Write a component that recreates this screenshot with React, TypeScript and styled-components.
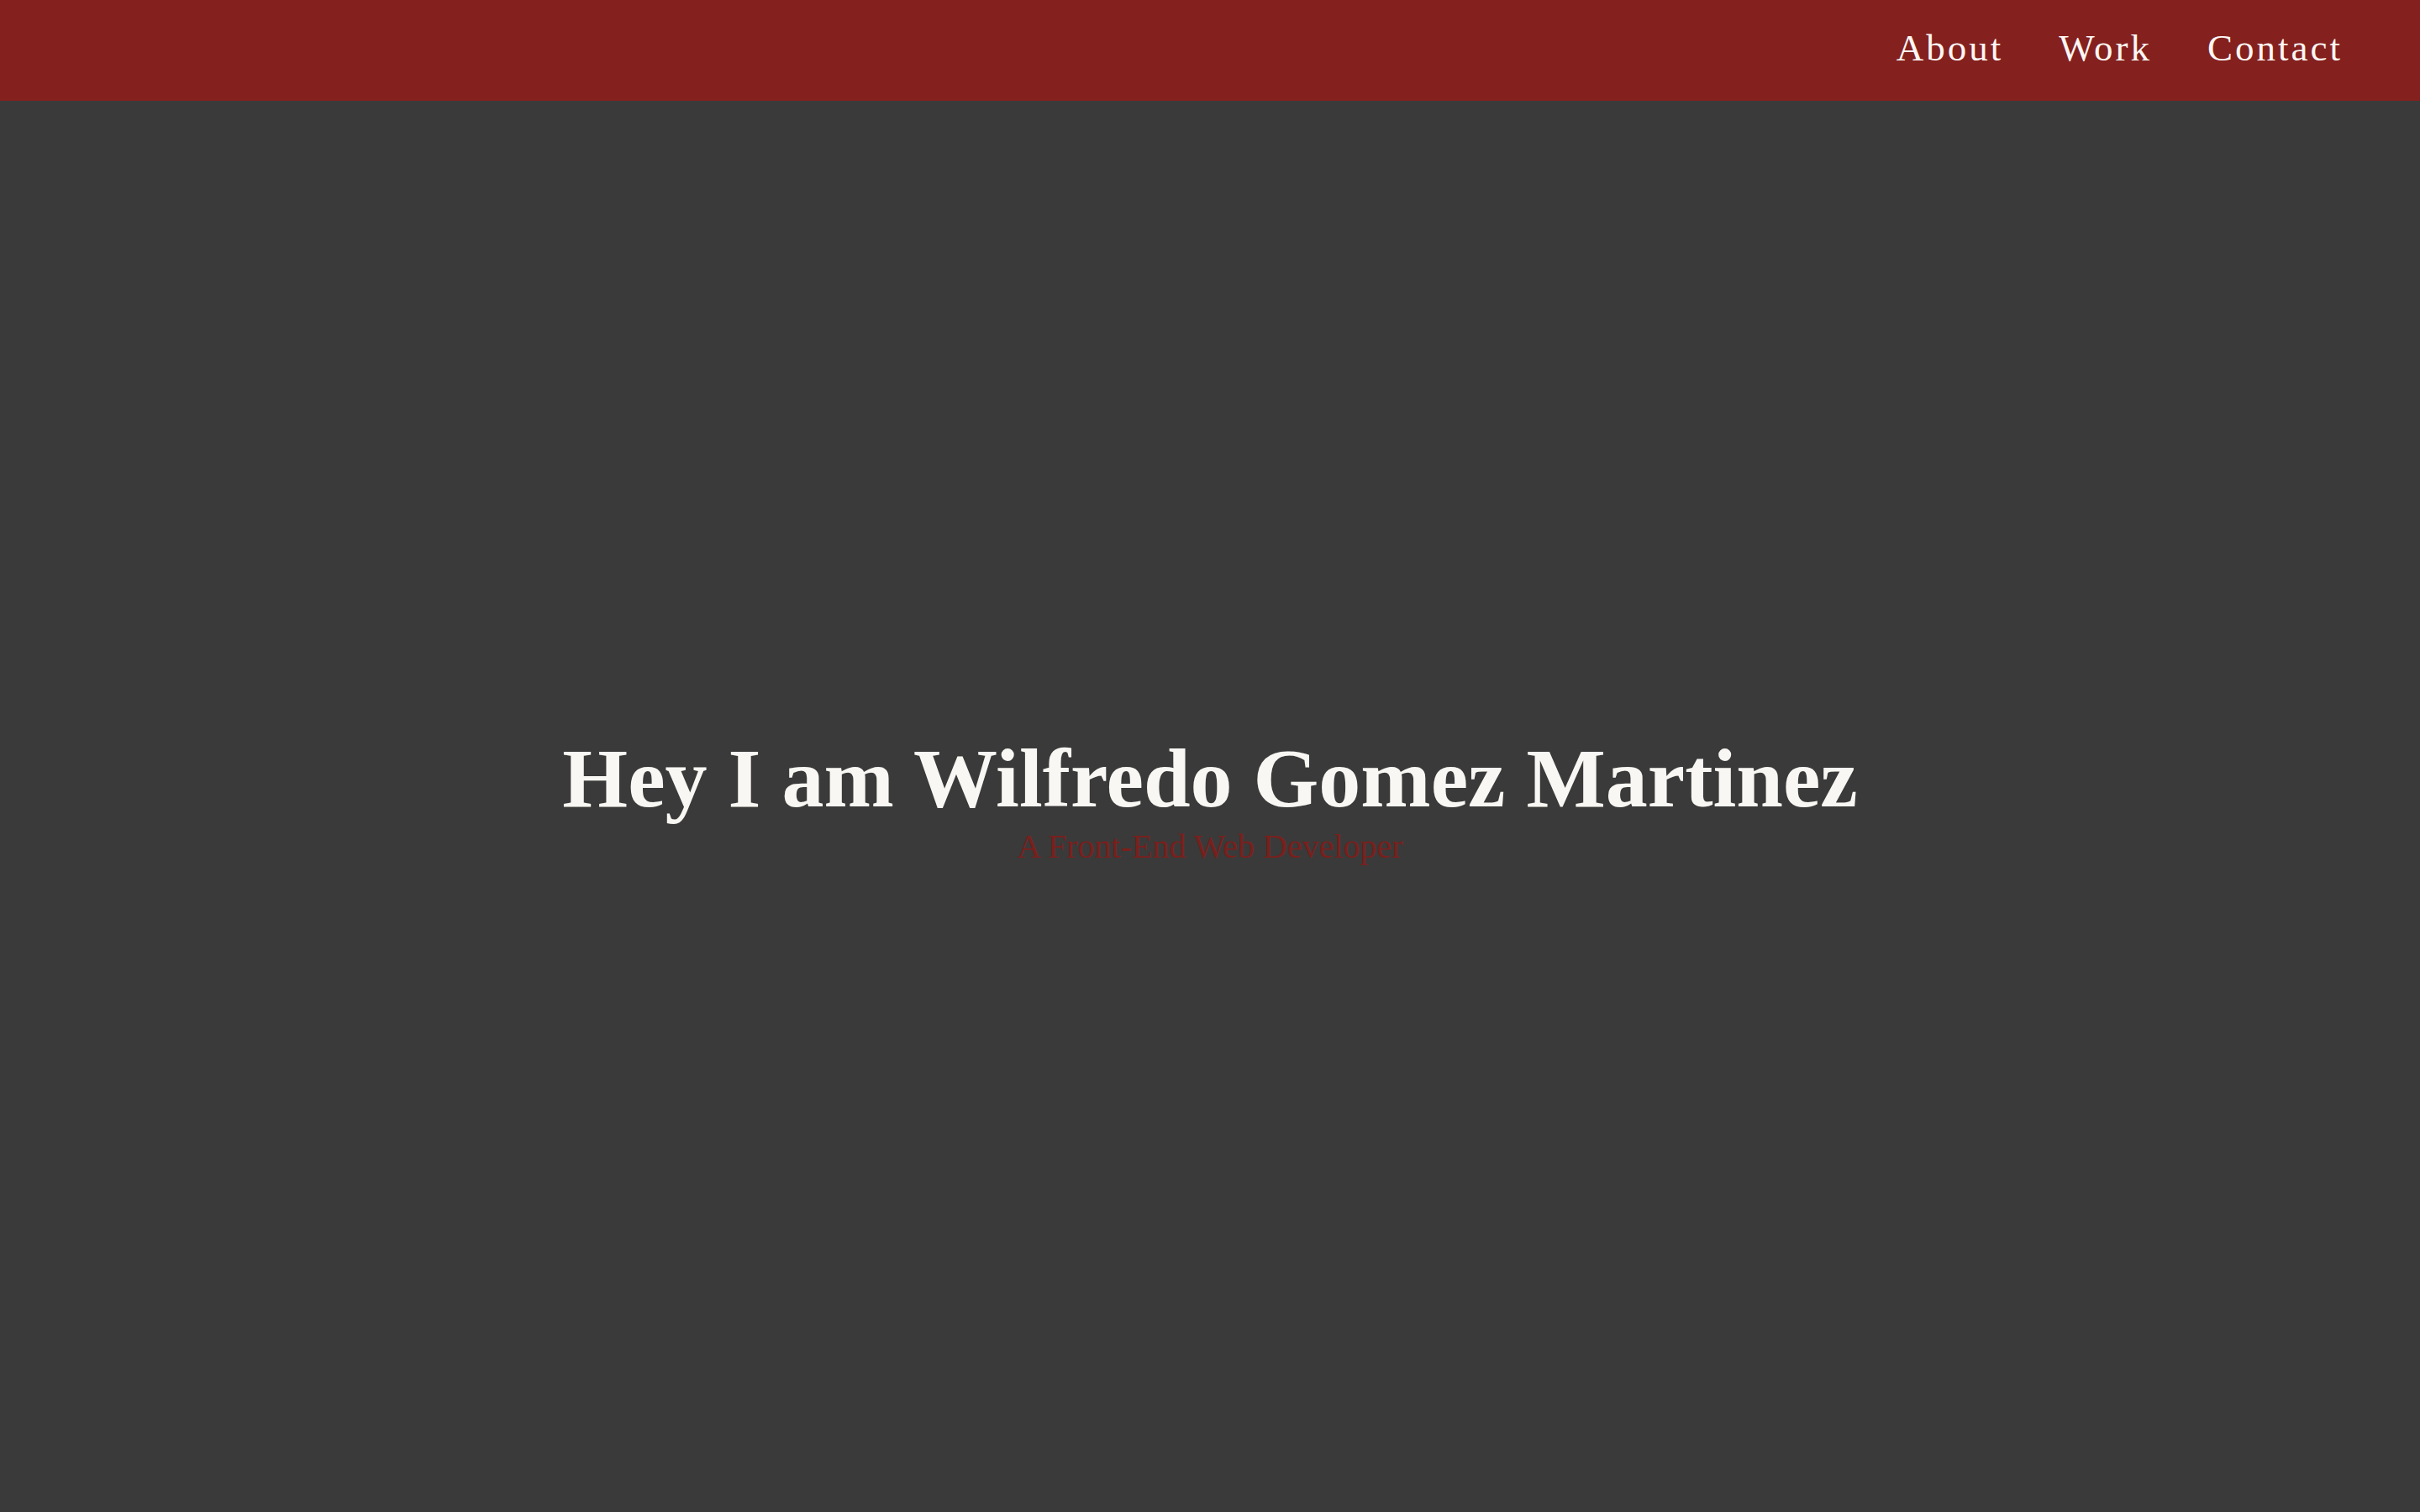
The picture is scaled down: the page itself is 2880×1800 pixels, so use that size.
import styled, { createGlobalStyle } from "styled-components";

const GlobalStyle = createGlobalStyle`
  * {
    box-sizing: border-box;
  }
  html, body {
    margin: 0;
    padding: 0;
    background-color: #3a3a3a;
    font-family: "Liberation Serif", "Times New Roman", serif;
  }
`;

const Page = styled.div`
  min-height: 100vh;
  display: flex;
  flex-direction: column;
  background-color: #3a3a3a;
`;

const NavBar = styled.header`
  height: 120px;
  flex-shrink: 0;
  display: flex;
  align-items: center;
  justify-content: flex-end;
  padding: 0 92px 6px 0;
  background-color: #84211e;
`;

const NavList = styled.nav`
  display: flex;
  gap: 66px;
`;

const NavLink = styled.a`
  color: #fdf6f4;
  font-size: 45px;
  letter-spacing: 3px;
  text-decoration: none;
  cursor: pointer;
`;

const Hero = styled.main`
  flex: 1;
  display: flex;
  flex-direction: column;
  align-items: center;
  justify-content: center;
  padding-bottom: 20px;
  text-align: center;
`;

const Title = styled.h1`
  margin: 0;
  color: #f8f7f3;
  font-size: 100px;
  font-weight: 700;
`;

const Subtitle = styled.p`
  margin: 0;
  color: #7a1f1c;
  font-size: 40px;
`;

const links = ["About", "Work", "Contact"];

const App = () => {
  return (
    <>
      <GlobalStyle />
      <Page>
        <NavBar>
          <NavList>
            {links.map((l) => (
              <NavLink key={l} href={`#${l.toLowerCase()}`}>
                {l}
              </NavLink>
            ))}
          </NavList>
        </NavBar>
        <Hero>
          <Title>Hey I am Wilfredo Gomez Martinez</Title>
          <Subtitle>A Front-End Web Developer</Subtitle>
        </Hero>
      </Page>
    </>
  );
};

export default App;
